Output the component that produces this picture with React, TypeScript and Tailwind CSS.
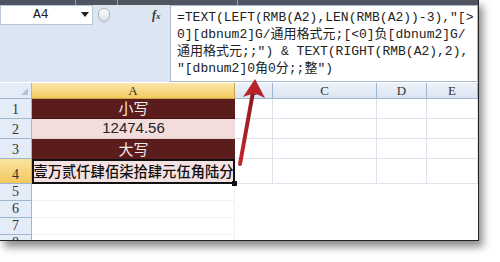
const mono = { fontFamily: '"Liberation Mono", "Noto Sans CJK SC", monospace' };

const formulaLines = [
  '=TEXT(LEFT(RMB(A2),LEN(RMB(A2))-3),"[>',
  '0][dbnum2]G/通用格式元;[<0]负[dbnum2]G/',
  '通用格式元;;") & TEXT(RIGHT(RMB(A2),2),',
  '"[dbnum2]0角0分;;整")',
];

const columns = [
  { label: "B", w: "w-[38px]" },
  { label: "C", w: "w-[104px]" },
  { label: "D", w: "w-[50px]" },
  { label: "E", w: "flex-1" },
];

function RowHead({ n, h, active }: { n: string; h: string; active?: boolean }) {
  return (
    <div
      className={`${h} w-[32px] shrink-0 flex items-end justify-center pb-[1px] border-r border-b border-[#9eb6ce] text-[14px] leading-none text-[#333] font-['Liberation_Serif',serif] ${
        active ? "bg-gradient-to-b from-[#fbe3a0] to-[#f3c85e]" : "bg-[#e4ecf7]"
      }`}
    >
      {n}
    </div>
  );
}

function EmptyCols() {
  return (
    <>
      {columns.map((c) => (
        <div key={c.label} className={`${c.w} shrink-0 border-r border-b border-[#dde3ec] bg-white`} />
      ))}
    </>
  );
}

export default function App() {
  return (
    <div className="w-[500px] h-[262px] bg-white relative overflow-hidden">
      <div className="w-[479px] h-[241px] flex flex-col overflow-hidden border-r border-b border-[#222] shadow-[4px_6px_8px_rgba(0,0,0,0.45)] bg-white">
        {/* ribbon edge */}
        <div className="h-[5px] shrink-0 flex bg-[#4f5560]">
          <div className="w-[76px] border-r border-[#9aa3ad]" />
          <div className="w-[42px] border-r border-[#9aa3ad]" />
          <div className="w-[120px] border-r border-[#9aa3ad]" />
          <div className="flex-1" />
        </div>

        {/* name box + formula bar */}
        <div className="h-[77px] shrink-0 flex bg-[#dce6f2]">
          <div className="w-[170px] shrink-0 flex flex-col">
            <div className="h-[20px] flex items-center">
              <div className="w-[93px] h-[20px] bg-white border border-[#b8c6d8] flex items-center relative">
                <span style={mono} className="ml-[32px] text-[13px] text-[#222]">A4</span>
                <span className="absolute right-[3px] top-[6px] w-0 h-0 border-l-[4px] border-r-[4px] border-t-[5px] border-l-transparent border-r-transparent border-t-[#222]" />
              </div>
              <div className="ml-[5px] w-[12px] h-[14px] rounded-full border border-[#aab4c0] bg-gradient-to-b from-white to-[#d9dee5]" />
              <span className="ml-[42px] italic text-[12px] text-[#333] font-['Liberation_Serif',serif] font-bold">
                f<span className="text-[9px]">x</span>
              </span>
            </div>
          </div>
          <div className="flex-1 bg-white border border-[#a9b8cb] pl-[6px] pt-[3px] text-[13px] leading-[17px] text-[#222]" style={mono}>
            {formulaLines.map((l) => (
              <div key={l} className="whitespace-pre">{l}</div>
            ))}
          </div>
        </div>

        {/* column headers */}
        <div className="h-[16px] shrink-0 flex mt-[1px] text-[13px] leading-none text-[#333] font-['Liberation_Serif',serif]">
          <div className="w-[32px] border-r border-b border-[#9eb6ce] bg-[#e4ecf7] relative">
            <span className="absolute right-[3px] bottom-[3px] w-0 h-0 border-l-[7px] border-t-[7px] border-l-transparent border-t-transparent border-b-0 border-r-0 [border-bottom:7px_solid_#b7c3d2]" />
          </div>
          <div className="w-[203px] flex items-center justify-center border-r border-b border-[#c9a44c] bg-gradient-to-b from-[#fbe6a8] to-[#f4ca5c]">A</div>
          {columns.map((c) => (
            <div key={c.label} className={`${c.w} shrink-0 flex items-center justify-center border-r border-b border-[#9eb6ce] bg-gradient-to-b from-[#edf2f9] to-[#dbe5f2]`}>
              {c.label}
            </div>
          ))}
        </div>

        {/* rows */}
        <div className="flex h-[20px] shrink-0">
          <RowHead n="1" h="h-[20px]" />
          <div className="w-[203px] flex items-center justify-center bg-[#5b1c1c] text-[#f3e8e8] text-[15px] font-['Noto_Sans_CJK_SC',sans-serif] border-b border-[#4a1414]">小写</div>
          <EmptyCols />
        </div>
        <div className="flex h-[20px] shrink-0">
          <RowHead n="2" h="h-[20px]" />
          <div className="w-[203px] flex items-center justify-center bg-[#f2dcdc] text-[#222] text-[15px] font-['Liberation_Sans',sans-serif] border-b border-[#e5cccc]">12474.56</div>
          <EmptyCols />
        </div>
        <div className="flex h-[20px] shrink-0">
          <RowHead n="3" h="h-[20px]" />
          <div className="w-[203px] flex items-center justify-center bg-[#5b1c1c] text-[#f3e8e8] text-[15px] font-['Noto_Sans_CJK_SC',sans-serif]">大写</div>
          <EmptyCols />
        </div>
        <div className="flex h-[25px] shrink-0">
          <RowHead n="4" h="h-[25px]" active />
          <div className="w-[203px] relative flex items-center justify-center bg-[#f4e2e2] border-2 border-[#111] text-[#111] text-[14.3px] font-medium leading-none whitespace-nowrap font-['Noto_Sans_CJK_SC',sans-serif]">
            壹万贰仟肆佰柒拾肆元伍角陆分
            <span className="absolute right-[-4px] bottom-[-4px] w-[5px] h-[5px] bg-[#111]" />
          </div>
          <EmptyCols />
        </div>
        {["5", "6", "7", "8"].map((n) => (
          <div key={n} className="flex h-[17px] shrink-0">
            <RowHead n={n} h="h-[17px]" />
            <div className="w-[203px] shrink-0 bg-white border-r border-b border-[#eef1f5]" />
            <div className="flex-1 bg-white" />
          </div>
        ))}
      </div>

      {/* red arrow */}
      <svg className="absolute left-0 top-0" width="500" height="262" viewBox="0 0 500 262">
        <defs>
          <linearGradient id="ar" x1="0" y1="0" x2="1" y2="0">
            <stop offset="0" stopColor="#c1272d" />
            <stop offset="1" stopColor="#8e1a1f" />
          </linearGradient>
        </defs>
        <line x1="240" y1="164" x2="253" y2="92" stroke="url(#ar)" strokeWidth="4" strokeLinecap="round" />
        <polygon points="255,79 265,98 254,93 243,97" fill="#b8242a" />
      </svg>
    </div>
  );
}
